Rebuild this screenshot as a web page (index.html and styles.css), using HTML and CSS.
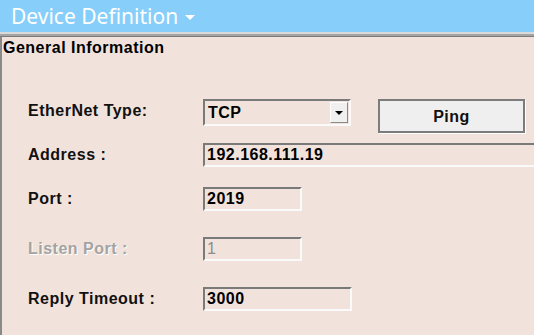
FILE: index.html
```html
<!DOCTYPE html>
<html lang="en">
<head>
    <meta charset="UTF-8">
    <meta name="viewport" content="width=device-width, initial-scale=1.0">
    <title>Device Definition</title>
    <link rel="stylesheet" href="styles.css">
</head>
<body>
    <header class="titlebar">
        <span class="title">Device Definition</span>
        <span class="caret"></span>
    </header>
    <div class="divider"></div>
    <div class="panel">
        <h2 class="group-title">General Information</h2>
        <div class="form">
            <div class="row row-type">
                <label class="label">EtherNet Type:</label>
                <div class="combo">
                    <span class="combo-text">TCP</span>
                    <span class="combo-btn"><span class="arrow"></span></span>
                </div>
                <button class="ping">Ping</button>
            </div>
            <div class="row row-address">
                <label class="label">Address :</label>
                <div class="field field-wide">192.168.111.19</div>
            </div>
            <div class="row row-port">
                <label class="label">Port :</label>
                <div class="field field-short">2019</div>
            </div>
            <div class="row row-listen">
                <label class="label disabled">Listen Port :</label>
                <div class="field field-short field-disabled">1</div>
            </div>
            <div class="row row-timeout">
                <label class="label">Reply Timeout :</label>
                <div class="field field-mid">3000</div>
            </div>
        </div>
    </div>
</body>
</html>
```

FILE: styles.css
```css
body {
    margin: 0;
    padding: 0;
    background-color: #f1e3dc;
    font-family: "Liberation Sans", Arial, sans-serif;
    overflow: hidden;
    height: 335px;
}
.titlebar {
    height: 32px;
    background-color: #87cefa;
    color: #fff;
    display: flex;
    align-items: center;
    padding-left: 11px;
}
.title {
    font-family: "Noto Sans", sans-serif;
    font-size: 21px;
    line-height: 32px;
}
.caret {
    width: 0;
    height: 0;
    margin-left: 7px;
    margin-top: 3px;
    border-left: 5px solid transparent;
    border-right: 5px solid transparent;
    border-top: 5px solid #fff;
}
.divider {
    height: 5px;
    background: linear-gradient(#dadada 0, #dadada 2px, #a4a4a4 2px, #a4a4a4 4px, #7c7c7c 4px);
}
.panel {
    border-left: 2px solid #8a8a8a;
    height: 300px;
}
.group-title {
    margin: 0;
    padding: 2px 0 0 1px;
    font-size: 16px;
    letter-spacing: 0.5px;
    font-weight: bold;
    color: #000;
}
.form {
    padding-left: 26px;
    padding-top: 42px;
}
.row {
    display: flex;
    align-items: center;
}
.label {
    width: 175px;
    flex-shrink: 0;
    font-size: 16px;
    letter-spacing: 0.5px;
    font-weight: bold;
    color: #111;
}
.label.disabled {
    color: #a3a3a3;
    text-shadow: 1px 1px 0 #fff;
}
.row-type {
    align-items: flex-start;
    height: 34px;
}
.row-type .label {
    margin-top: 3px;
}
.combo {
    width: 148px;
    height: 27px;
    box-sizing: border-box;
    border: 2px solid;
    border-color: #7a7a7a #fafafa #fafafa #7a7a7a;
    display: flex;
    align-items: center;
    justify-content: space-between;
    padding: 0 1px 0 3px;
}
.combo-text {
    font-size: 16px;
    letter-spacing: 0.5px;
    font-weight: bold;
}
.combo-btn {
    width: 18px;
    height: 21px;
    box-sizing: border-box;
    background-color: #f0f0f0;
    border: 1px solid;
    border-color: #fff #8a8a8a #8a8a8a #fff;
    display: flex;
    align-items: center;
    justify-content: center;
}
.arrow {
    width: 0;
    height: 0;
    border-left: 4px solid transparent;
    border-right: 4px solid transparent;
    border-top: 4px solid #000;
}
.ping {
    margin-left: 27px;
    width: 147px;
    height: 34px;
    background-color: #efefef;
    border: 2px solid #7c7c7c;
    box-shadow: 1px 1px 0 #fff;
    font-family: "Liberation Sans", Arial, sans-serif;
    font-size: 16px;
    letter-spacing: 0.5px;
    font-weight: bold;
    color: #111;
    padding: 2px 0 0;
}
.field {
    height: 24px;
    box-sizing: border-box;
    border: 2px solid;
    border-color: #7a7a7a #fafafa #fafafa #7a7a7a;
    font-size: 16px;
    letter-spacing: 0.5px;
    font-weight: bold;
    line-height: 20px;
    padding-left: 2px;
    color: #000;
}
.field-wide {
    width: 340px;
    flex-shrink: 0;
}
.field-short {
    width: 99px;
}
.field-mid {
    width: 149px;
}
.field-disabled {
    color: #8c8c8c;
    font-weight: normal;
}
.row-address {
    margin-top: 10px;
}
.row-port {
    margin-top: 20px;
}
.row-listen {
    margin-top: 26px;
}
.row-timeout {
    margin-top: 26px;
}
```
